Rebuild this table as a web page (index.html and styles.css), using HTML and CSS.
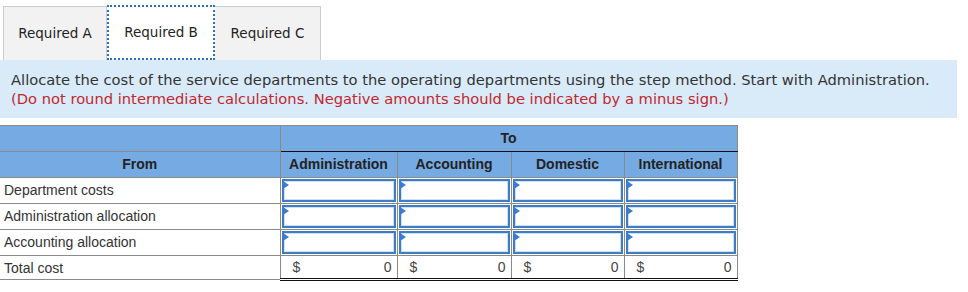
FILE: index.html
```html
<!DOCTYPE html>
<html>
<head>
<meta charset="utf-8">
<link rel="stylesheet" href="styles.css">
</head>
<body>
<div class="tabs">
  <div class="tab">Required A</div>
  <div class="tab active">Required B</div>
  <div class="tab">Required C</div>
</div>
<div class="instructions">
  <p class="main">Allocate the cost of the service departments to the operating departments using the step method. Start with Administration.</p>
  <p class="note">(Do not round intermediate calculations. Negative amounts should be indicated by a minus sign.)</p>
</div>
<table class="grid">
  <colgroup>
    <col class="c-from"><col class="c-adm"><col class="c-acc"><col class="c-dom"><col class="c-int">
  </colgroup>
  <tr class="to-row"><th class="blank"></th><th class="to" colspan="4">To</th></tr>
  <tr class="head-row"><th>From</th><th>Administration</th><th>Accounting</th><th>Domestic</th><th>International</th></tr>
  <tr class="data-row">
    <td class="label">Department costs</td>
    <td class="in"><div class="box"><span class="tri"></span></div></td>
    <td class="in"><div class="box"><span class="tri"></span></div></td>
    <td class="in"><div class="box"><span class="tri"></span></div></td>
    <td class="in"><div class="box"><span class="tri"></span></div></td>
  </tr>
  <tr class="data-row">
    <td class="label">Administration allocation</td>
    <td class="in"><div class="box"><span class="tri"></span></div></td>
    <td class="in"><div class="box"><span class="tri"></span></div></td>
    <td class="in"><div class="box"><span class="tri"></span></div></td>
    <td class="in"><div class="box"><span class="tri"></span></div></td>
  </tr>
  <tr class="data-row">
    <td class="label">Accounting allocation</td>
    <td class="in"><div class="box"><span class="tri"></span></div></td>
    <td class="in"><div class="box"><span class="tri"></span></div></td>
    <td class="in"><div class="box"><span class="tri"></span></div></td>
    <td class="in"><div class="box"><span class="tri"></span></div></td>
  </tr>
  <tr class="total-row">
    <td class="label">Total cost</td>
    <td class="sum"><div class="sumwrap"><span>$</span><span>0</span></div></td>
    <td class="sum"><div class="sumwrap"><span>$</span><span>0</span></div></td>
    <td class="sum"><div class="sumwrap"><span>$</span><span>0</span></div></td>
    <td class="sum"><div class="sumwrap"><span>$</span><span>0</span></div></td>
  </tr>
</table>
</body>
</html>
```

FILE: styles.css
```css
html, body {
  margin: 0;
  padding: 0;
  background: #ffffff;
}
body {
  font-family: "Liberation Sans", Arial, sans-serif;
  color: #333;
}
.tabs {
  display: flex;
  padding: 6px 0 0 3px;
  height: 54px;
}
.tab {
  box-sizing: border-box;
  width: 104px;
  height: 54px;
  display: flex;
  align-items: center;
  justify-content: center;
  background: #f2f2f2;
  border: 1px solid #cccccc;
  border-bottom: none;
  font-family: "DejaVu Sans", Verdana, sans-serif;
  font-size: 13.5px;
  color: #222;
  padding-bottom: 2px;
}
.tab + .tab {
  border-left: none;
}
.tab.active {
  width: 108px;
  background: #ffffff;
  border: 2px dotted #2f6fbf;
  margin-top: -1px;
  height: 55px;
}
.tab:last-child {
  width: 106px;
}
.instructions {
  width: 957px;
  box-sizing: border-box;
  background: #d9ebf9;
  padding: 10px 11px 10px;
  font-family: "DejaVu Sans", Verdana, sans-serif;
  font-size: 14.7px;
  line-height: 19px;
}
.instructions p {
  margin: 0;
}
.main {
  color: #333;
}
.note {
  color: #c1272d;
}
.grid {
  margin-top: 7px;
  border-collapse: collapse;
  table-layout: fixed;
  width: 737px;
}
.c-from { width: 280px; }
.c-adm { width: 117px; }
.c-acc { width: 114px; }
.c-dom { width: 113px; }
.c-int { width: 113px; }
.grid th {
  background: #76aae2;
  font-family: "Liberation Sans", Arial, sans-serif;
  font-weight: bold;
  font-size: 14px;
  line-height: 25px;
  color: #222;
  padding: 0;
  border: 1px solid #8a8a8a;
  text-align: center;
}
.grid th:first-child {
  border-left: none;
}
.to-row th.to {
  border-bottom: 1px solid #111;
}
.grid td {
  padding: 0;
  border: 1px solid #8a8a8a;
}
.grid td.label {
  border-left: none;
  padding-left: 4px;
  font-size: 14px;
  line-height: 25px;
  color: #333;
}
td.in {
  padding: 1px;
}
.box {
  position: relative;
  box-sizing: border-box;
  height: 23px;
  border: 2px solid #3f7cc6;
  box-shadow: inset 0 0 0 1px #cfe0f3;
  background: #fff;
}
.tri {
  position: absolute;
  left: -1px;
  top: 0;
  width: 0;
  height: 0;
  border-top: 4px solid transparent;
  border-bottom: 4px solid transparent;
  border-left: 6px solid #3a7bd5;
}
.total-row td.label {
  line-height: 22px;
}
.total-row td.sum {
  border-top: 1px solid #111;
  border-bottom: 3px double #111;
  font-size: 14px;
  line-height: 22px;
  color: #444;
}
.sumwrap {
  display: flex;
  justify-content: space-between;
  padding: 0 5px 0 12px;
}
```
